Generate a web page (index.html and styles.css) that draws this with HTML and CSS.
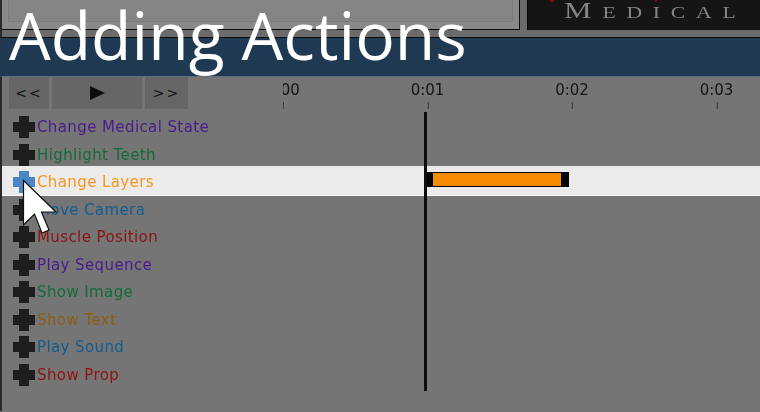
FILE: index.html
```html
<!DOCTYPE html>
<html lang="en">
<head>
    <meta charset="UTF-8">
    <meta name="viewport" content="width=device-width, initial-scale=1.0">
    <title>Adding Actions</title>
    <link rel="stylesheet" href="styles.css">
</head>
<body>

<div class="screen">
    <h1 class="slide-title">Adding Actions</h1>

    <div class="top-strip">
        <div class="top-panel"><div class="top-panel-inner"></div></div>
        <div class="logo-panel">
            <span class="logo-dot logo-dot-a"></span>
            <span class="logo-dot logo-dot-b"></span>
            <span class="logo-text">Medical</span>
        </div>
    </div>

    <div class="title-band"></div>

    <div class="editor">
        <div class="toolbar">
            <div class="buttons">
                <button class="btn btn-small">&lt;&lt;</button>
                <button class="btn btn-play">
                    <svg width="15" height="14" viewBox="0 0 15 14"><path d="M0 0 L15 7 L0 14 Z" fill="#0c0c0c"/></svg>
                </button>
                <button class="btn btn-small btn-next">&gt;&gt;</button>
            </div>
            <div class="ruler">
                <div class="ruler-cell">0:00</div>
                <div class="ruler-cell">0:01</div>
                <div class="ruler-cell">0:02</div>
                <div class="ruler-cell">0:03</div>
            </div>
        </div>

        <div class="rows">
            <div class="row purple"><svg class="plus"><use href="#plus"/></svg><span class="label">Change Medical State</span></div>
            <div class="row green"><svg class="plus"><use href="#plus"/></svg><span class="label">Highlight Teeth</span></div>
            <div class="row row-active orange">
                <svg class="plus"><use href="#plus"/></svg><span class="label">Change Layers</span>
                <div class="clip"><div class="clip-fill"></div></div>
            </div>
            <div class="row blue"><svg class="plus"><use href="#plus"/></svg><span class="label">Move Camera</span></div>
            <div class="row red"><svg class="plus"><use href="#plus"/></svg><span class="label">Muscle Position</span></div>
            <div class="row purple"><svg class="plus"><use href="#plus"/></svg><span class="label">Play Sequence</span></div>
            <div class="row green"><svg class="plus"><use href="#plus"/></svg><span class="label">Show Image</span></div>
            <div class="row brown"><svg class="plus"><use href="#plus"/></svg><span class="label">Show Text</span></div>
            <div class="row blue"><svg class="plus"><use href="#plus"/></svg><span class="label">Play Sound</span></div>
            <div class="row red"><svg class="plus"><use href="#plus"/></svg><span class="label">Show Prop</span></div>
        </div>

        <div class="playhead"></div>
    </div>

    <svg class="cursor" width="36" height="56" viewBox="0 0 36 56">
        <path d="M1.5 1.5 L1.5 46 L12.5 35 L20 54 L27 51 L19.5 33 L34 33 Z" fill="#fff" stroke="#111" stroke-width="1.2"/>
    </svg>
</div>

<svg width="0" height="0" class="defs">
    <symbol id="plus" viewBox="0 0 22 22">
        <path d="M6 0 H16 V6 H22 V16 H16 V22 H6 V16 H0 V6 H6 Z" fill="currentColor"/>
    </symbol>
</svg>

</body>
</html>
```

FILE: styles.css
```css
body {
    margin: 0;
    padding: 0;
    background: #757575;
    overflow: hidden;
}

.screen {
    position: relative;
    width: 760px;
    height: 412px;
    overflow: hidden;
    background: #757575;
    font-family: "DejaVu Sans", sans-serif;
}

.defs {
    position: absolute;
}

.slide-title {
    position: absolute;
    left: 9px;
    top: -12px;
    z-index: 5;
    margin: 0;
    font-family: "Open Sans", sans-serif;
    font-size: 66px;
    font-weight: 400;
    line-height: 92px;
    color: #fff;
    white-space: nowrap;
}

/* Top strip */
.top-strip {
    display: flex;
    height: 37px;
    background: #6b6b6b;
    border-left: 2px solid #2a2a2a;
    border-bottom: 1px solid #0c0c0c;
    box-sizing: content-box;
    filter: blur(0.35px);
}

.top-panel {
    width: 519px;
    height: 30px;
    box-sizing: border-box;
    padding: 0 6px 7px 6px;
    background: #898989;
    border-bottom: 1px solid #0c0c0c;
    border-right: 1px solid #0c0c0c;
}

.top-panel-inner {
    height: 100%;
    box-sizing: border-box;
    background: #848484;
    border-left: 1px solid #7b7b7b;
    border-bottom: 1px solid #7b7b7b;
    border-right: 1px solid #7b7b7b;
}

.logo-panel {
    position: relative;
    width: 232px;
    height: 30px;
    margin-left: 7px;
    background: #151515;
    border-left: 1px solid #050505;
}

.logo-text {
    position: absolute;
    left: 36px;
    top: -3px;
    font-family: "Liberation Serif", serif;
    font-size: 23px;
    line-height: 28px;
    font-variant: small-caps;
    letter-spacing: 8px;
    color: #858585;
    transform: scaleX(1.35);
    transform-origin: left center;
}

.logo-dot {
    position: absolute;
    top: 0;
    width: 4px;
    height: 2px;
    background: #8a0808;
}

.logo-dot-a {
    left: 22px;
}

.logo-dot-b {
    left: 127px;
    width: 2px;
}

.title-band {
    height: 38px;
    background: #203953;
}

/* Editor */
.editor {
    position: relative;
    height: 335px;
    border-left: 2px solid #2a2a2a;
    border-top: 1px solid #5f6f7d;
    box-sizing: border-box;
    filter: blur(0.35px);
}

.toolbar {
    display: flex;
    height: 36.5px;
}

.buttons {
    display: flex;
    gap: 3px;
    margin-left: 7px;
    height: 32px;
}

.btn {
    display: flex;
    align-items: center;
    justify-content: center;
    height: 32px;
    padding: 0;
    border: none;
    background: #666;
    color: #111;
    font-family: "DejaVu Sans", sans-serif;
    font-size: 14px;
    letter-spacing: 2px;
}

.btn-small {
    width: 40px;
}

.btn-next {
    width: 43px;
}

.btn-play {
    width: 90px;
}

.ruler {
    display: flex;
    overflow: hidden;
    margin-left: 95px;
    flex: 1;
}

.ruler-cell {
    position: relative;
    flex: none;
    width: 144.5px;
    height: 32px;
    padding-top: 4px;
    box-sizing: border-box;
    text-align: center;
    font-size: 15px;
    line-height: 18px;
    color: #141414;
    transform: translateX(-72.25px);
}

.ruler-cell::after {
    content: "";
    position: absolute;
    left: 72px;
    top: 25px;
    width: 1px;
    height: 7px;
    background: #333;
}

/* Rows */
.rows {
    display: flex;
    flex-direction: column;
}

.row {
    display: flex;
    align-items: center;
    flex: none;
    height: 27.5px;
    padding-left: 11px;
    font-size: 15px;
    letter-spacing: 0.4px;
}

.plus {
    flex: none;
    width: 22px;
    height: 22px;
    margin-right: 2px;
    color: #1e1e1e;
}

.label {
    flex: none;
    width: 388px;
    white-space: nowrap;
}

.row-active {
    height: 30px;
    margin-top: -2.5px;
    padding-top: 2px;
    background: #ebebeb;
    border-bottom: 1px solid #fafafa;
    box-sizing: border-box;
}

.row-active .plus {
    color: #4a86c5;
}

.purple { color: #4a1a8e; }
.green { color: #146b3a; }
.orange { color: #f7941d; }
.blue { color: #135c91; }
.red { color: #8e1212; }
.brown { color: #8f5a14; }

.clip {
    flex: none;
    width: 144px;
    height: 15px;
    margin-bottom: 5px;
    box-sizing: border-box;
    padding: 1px 8px;
    background: #050505;
}

.clip-fill {
    height: 100%;
    background: #f68b00;
}

.playhead {
    position: absolute;
    left: 422px;
    top: 35px;
    width: 2.5px;
    height: 279px;
    background: #0c0c0c;
}

.cursor {
    position: absolute;
    left: 22px;
    top: 179px;
    z-index: 4;
}
```
